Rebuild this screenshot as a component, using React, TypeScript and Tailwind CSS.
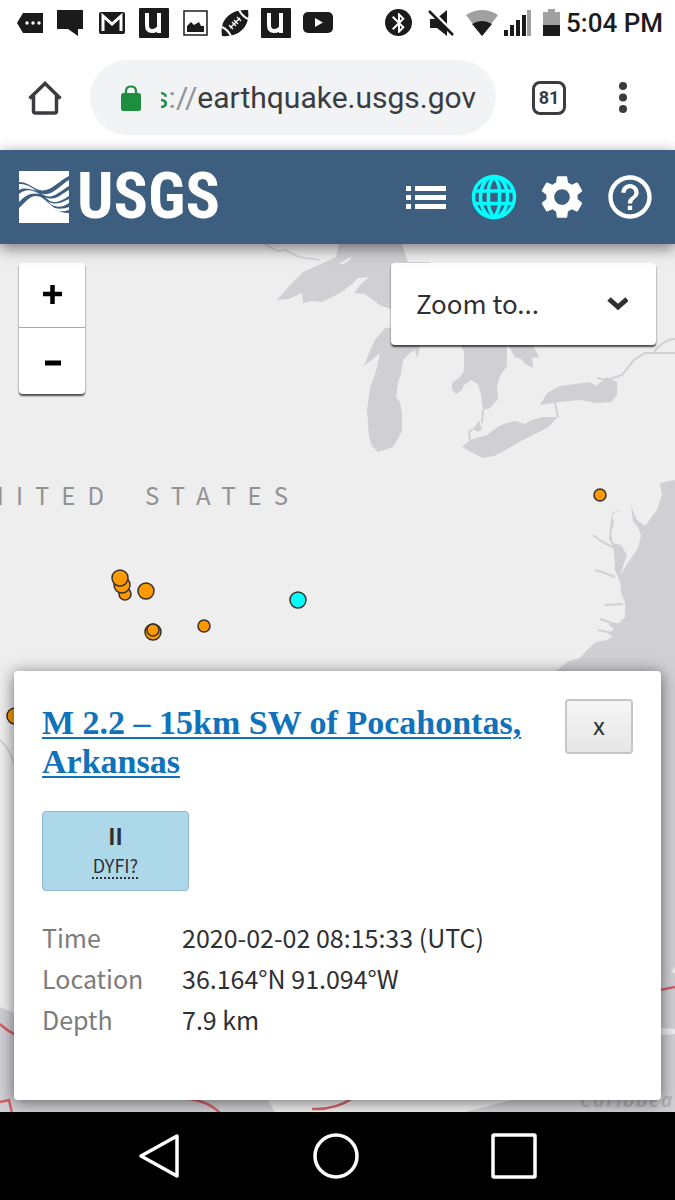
import React from "react";
import { MdBluetooth, MdHelpOutline, MdSettings } from "react-icons/md";

const MARKERS = [
  { x: 125, y: 594, r: 6 },
  { x: 122, y: 585, r: 8 },
  { x: 120, y: 578, r: 8 },
  { x: 146, y: 591, r: 8 },
  { x: 153, y: 632, r: 8 },
  { x: 153, y: 630, r: 6 },
  { x: 204, y: 626, r: 6 },
  { x: 600, y: 495, r: 6 },
  { x: 15, y: 716, r: 8 },
  { x: 298, y: 600, r: 8, selected: true },
];

const DETAILS = [
  ["Time", "2020-02-02 08:15:33 (UTC)"],
  ["Location", "36.164°N 91.094°W"],
  ["Depth", "7.9 km"],
];

function AppBadge(): React.JSX.Element {
  return (
    <svg className="size-[30px]" viewBox="0 0 30 30" aria-hidden="true">
      <rect width="30" height="30" rx="1" fill="#1b1b1b" />
      <path
        d="M8 5V17Q8 23 13 23Q18 23 20 19M20 5V25"
        fill="none"
        stroke="#fff"
        strokeWidth="4"
      />
    </svg>
  );
}

function StatusBar(): React.JSX.Element {
  return (
    <div className="flex h-[45px] items-center justify-between pl-[17px] pr-3 text-[#1b1b1b]">
      <div className="flex items-center gap-3">
        <svg className="h-[22px] w-[27px]" viewBox="0 0 27 22" aria-hidden="true">
          <path d="M6 1H26V21H6L0 11Z" fill="#1b1b1b" />
          <g fill="#fff">
            <circle cx="10" cy="11" r="1.7" />
            <circle cx="16" cy="11" r="1.7" />
            <circle cx="22" cy="11" r="1.7" />
          </g>
        </svg>
        <svg className="h-[27px] w-[30px]" viewBox="0 0 30 27" aria-hidden="true">
          <path d="M1 1H27V20H22V27L12 20H1Z" fill="#1b1b1b" />
        </svg>
        <svg className="h-[22px] w-[29px]" viewBox="0 0 29 22" aria-hidden="true">
          <rect x="1" width="26" height="22" rx="2" fill="#1b1b1b" />
          <path
            d="M5 19V4L14 12L23 4V19"
            fill="none"
            stroke="#fff"
            strokeWidth="3"
          />
        </svg>
        <AppBadge />
        <svg className="size-[28px]" viewBox="0 0 28 28" aria-hidden="true">
          <rect x="3" y="2" width="23" height="24" fill="none" stroke="#1b1b1b" strokeWidth="1.5" />
          <path d="M6 23V17L10 13L13 16L18 13L20 17L23 17V23Z" fill="#1b1b1b" />
        </svg>
        <svg className="size-[28px]" viewBox="0 0 28 28" aria-hidden="true">
          <path
            d="M1 27Q-1 14 7 7Q14 0 27 1Q29 13 21 21Q14 28 1 27Z"
            fill="#1b1b1b"
          />
          <path
            d="M1 18Q7 21 10 27M18 1Q21 7 27 10"
            fill="none"
            stroke="#fff"
            strokeWidth="2"
          />
          <path
            d="M9 19L19 9M8 16L12 20M11 13L15 17M13 11L17 15M16 8L20 12"
            stroke="#fff"
            strokeWidth="1.3"
          />
        </svg>
        <AppBadge />
        <svg className="h-[21px] w-[30px]" viewBox="0 0 30 21" aria-hidden="true">
          <rect width="30" height="21" rx="5" fill="#1b1b1b" />
          <path d="M12 6L20 10.500L12 15Z" fill="#fff" />
        </svg>
      </div>

      <div className="flex items-center">
        <span className="flex size-[27px] items-center justify-center rounded-full bg-[#1b1b1b]">
          <MdBluetooth className="size-6 text-white" />
        </span>
        <svg className="ml-4 h-[26px] w-[26px]" viewBox="0 0 26 26" aria-hidden="true">
          <path d="M2 9H8L19 0V26L9 18H2Z" fill="#1b1b1b" />
          <path d="M3 0L26 23" stroke="#fff" strokeWidth="3" />
          <path d="M1 1L25 25" stroke="#1b1b1b" strokeWidth="2.500" />
        </svg>
        <svg className="ml-3 h-[26px] w-[32px]" viewBox="0 0 32 26" aria-hidden="true">
          <path d="M16 26L0 5Q16 -5 32 5Z" fill="#a0a0a0" />
          <path d="M16 26L6 14Q16 8 26 14Z" fill="#1b1b1b" />
        </svg>
        <svg className="ml-1.5 h-[26px] w-[27px]" viewBox="0 0 27 26" aria-hidden="true">
          <path d="M0 20H4V26H0ZM6 15H10V26H6ZM12 10H16V26H12ZM18 5H22V26H18Z" fill="#1b1b1b" />
          <path d="M23 0H27V26H23Z" fill="#a0a0a0" />
        </svg>
        <svg className="ml-3 h-[27px] w-[17px]" viewBox="0 0 17 27" aria-hidden="true">
          <path d="M5 0H12V3H17V16H0V3H5Z" fill="#a0a0a0" />
          <path d="M0 16H17V27H0Z" fill="#1b1b1b" />
        </svg>
        <span className="ml-1.5 font-[Roboto,sans-serif] text-[26px] font-medium leading-8">
          5:04 PM
        </span>
      </div>
    </div>
  );
}

function AddressBar(): React.JSX.Element {
  return (
    <div className="flex h-[105px] items-center pl-7 pr-12 font-[Roboto,sans-serif]">
      <button type="button" aria-label="Home" className="shrink-0">
        <svg className="size-[34px]" viewBox="0 0 34 34" aria-hidden="true">
          <path
            d="M1.500 17.500L17 2.500L32.500 17.500M5.500 14.500V30Q5.500 32 7.500 32H26.500Q28.500 32 28.500 30V14.500"
            fill="none"
            stroke="#3a3c40"
            strokeWidth="3.500"
          />
        </svg>
      </button>
      <button
        type="button"
        className="ml-7 flex h-[75px] min-w-0 flex-1 items-center rounded-full bg-[#f1f3f5] pl-[31px] pr-5"
      >
        <svg className="h-[26px] w-[20px] shrink-0" viewBox="0 0 20 26" aria-hidden="true">
          <path d="M5 10V6Q5 1.500 10 1.500Q15 1.500 15 6V10" fill="none" stroke="#1e8e3e" strokeWidth="2.200" />
          <rect y="8" width="20" height="18" rx="2.500" fill="#1e8e3e" />
        </svg>
        <span className="ml-5 flex min-w-0 flex-1 justify-end overflow-hidden whitespace-nowrap text-[30px] leading-10 text-[#3a3c40]">
          <span className="text-[#1e8e3e]">https</span>
          <span className="text-[#8f9296]">://</span>
          earthquake.usgs.gov
        </span>
      </button>
      <button
        type="button"
        aria-label="81 open tabs"
        className="ml-9 flex size-[34px] shrink-0 items-center justify-center rounded-lg border-[3px] border-[#3a3c40] text-lg font-bold text-[#3a3c40]"
      >
        81
      </button>
      <button type="button" aria-label="Menu" className="ml-[53px] shrink-0">
        <svg className="h-[31px] w-2" viewBox="0 0 8 31" fill="#3a3c40" aria-hidden="true">
          <circle cx="4" cy="4" r="4" />
          <circle cx="4" cy="15.500" r="4" />
          <circle cx="4" cy="27" r="4" />
        </svg>
      </button>
    </div>
  );
}

function Header(): React.JSX.Element {
  return (
    <header className="relative z-10 flex h-[94px] items-center justify-between bg-[#3e5e80] pl-[19px] pr-[19px] text-white shadow-[0_4px_14px_rgba(0,0,0,0.5)]">
      <a href="#home" className="flex items-center gap-2">
        <svg className="h-[52px] w-[50px]" viewBox="0 0 50 52" aria-hidden="true">
          <rect width="50" height="52" fill="#fff" />
          <path
            d="M0 11C10 11 15 19 23 19.500C32 20 40 10 50 5V42C34 43 28 25 17 25C10 25 6 32 0 37Z"
            fill="#3e5e80"
          />
          <g fill="#fff">
            <path d="M0 13C8 12 14 18 20 21C12 18 6 16 0 19Z" />
            <path d="M0 23C7 17 13 19 21 23C13 21 6 24 0 31Z" />
            <path d="M22 22.500C33 26 40 15 50 9V15C40 21 34 28 26 24.500Z" />
            <path d="M26 26C36 31 42 23 50 19V25C42 30 37 33 30 29.500Z" />
            <path d="M29 30.500C37 35 44 31 50 28V32C44 36 38 37 32 33.500Z" />
            <path d="M32 35C38 39 44 38 50 36V39C44 41 38 41 34 37Z" />
          </g>
        </svg>
        <span className="font-['Liberation_Sans_Narrow','Roboto_Condensed','Noto_Sans_CJK_SC',sans-serif] text-[64px] font-bold leading-[60px]">
          USGS
        </span>
      </a>
      <nav className="flex items-center gap-6">
        <button type="button" aria-label="List">
          <svg className="h-[24px] w-[40px]" viewBox="0 0 40 24" fill="#fff" aria-hidden="true">
            <path d="M0 1H5V6H0ZM9 1H40V6H9ZM0 10H5V15H0ZM9 10H40V15H9ZM0 19H5V24H0ZM9 19H40V24H9Z" />
          </svg>
        </button>
        <button type="button" aria-label="Map">
          <svg className="size-[48px]" viewBox="0 0 48 48" fill="none" stroke="#00ffff" strokeWidth="3.500" aria-hidden="true">
            <circle cx="24" cy="24" r="20.500" />
            <ellipse cx="24" cy="24" rx="13.500" ry="20.500" />
            <path d="M18.500 16V32M29.500 16V32M18.500 16Q20 8 24 4Q28 8 29.500 16M18.500 32Q20 40 24 44Q28 40 29.500 32M5 18H43M5 30.500H43" />
          </svg>
        </button>
        <button type="button" aria-label="Settings" className="-ml-1.5">
          <MdSettings className="size-[52px]" />
        </button>
        <button type="button" aria-label="Help" className="-ml-2">
          <MdHelpOutline className="size-[52px]" />
        </button>
      </nav>
    </header>
  );
}

function MapCanvas(): React.JSX.Element {
  return (
    <svg
      className="absolute inset-0 size-full"
      viewBox="0 244 675 868"
      preserveAspectRatio="xMidYMin slice"
      role="img"
      aria-label="Earthquake map"
    >
      <rect y="244" width="675" height="868" fill="#eee" />
      <g fill="#d0cfd4">
        {/* Great Lakes */}
        <path d="M339 244L336 257L321 264L303 272L292 283L277 300L289 299L302 293L303 303L312 301L322 302L340 293L352 284L358 278L369 277L360 285L354 293L365 294L373 300L381 306L395 310L430 300V262L408 262L402 244Z" />
        <path d="M385 328L375 340L369 353L364 366L373 359L380 353L376 371L370 388L367 410L369 437L372 446L378 452L393 447L399 437L402 430V413L400 402L396 397L398 383L401 374L403 360L410 353L415 350L417 358L420 347V325Z" />
        <path d="M460 344L464 352V371L460 377L452 383L452 389L456 394L462 390L464 385L471 380L478 384L481 395L483 410L490 408L498 399L497 387L500 376L507 366L507 345Z" />
        <path d="M508 345L515 357L521 359L525 364L533 368L532 358L539 357L533 345Z" />
        <path d="M540 405L547 393L560 386L583 383L590 382L596 386L607 377L617 382L617 395L611 402L597 403L580 400L560 402Z" />
        <path d="M462 447L470 440L487 435L499 426L507 423L516 421L525 424L532 420L543 417L558 417L547 428L523 440L500 453L494 456L483 458L473 453Z" />
        <path d="M473 429L479 421L482 429L478 432Z" />
        {/* Atlantic coast and the Chesapeake */}
        <path d="M675 480L660 483L662 495L657 510L645 526L637 520L631 506L633 521L639 529L641 536L638 548L627 564L620 576L624 563L627 555L621 545L613 543L611 533L614 523L612 515L620 509L612 513L610 527L609 538L614 551L615 570L620 582L621 592L625 603L625 617L619 623L608 624L614 629L608 634L613 636L607 640L596 642L587 650L580 658L569 661L557 670L530 700L510 790L540 900L570 1000L590 1080L465 1112H675Z" />
        {/* Gulf of Mexico */}
        <path d="M0 1007L14 1013L100 1000L230 1040L275 1112H0Z" />
      </g>
      <g fill="#eee">
        <path d="M668 470L675 466V475L667 478Z" />
        <path d="M340 263L352 256L349 261L341 265Z" />
        <path d="M671 972L675 967V973ZM661 1028L675 1029V1034L661 1035Z" />
      </g>
      <g fill="none" stroke="#d0cfd4" strokeWidth="2">
        <path d="M483 410L482 423M470 440L469 432L473 429M558 417L555 403M597 378L607 380L622 375L634 360L645 353H675M654 352Q664 339 675 339" />
        <path d="M593 535L601 541L612 547M595 570L605 573L615 577M605 605L623 604M600 619L617 625M598 630L612 633M0 740Q10 749 15 766" />
        <path d="M265 244L277 251L285 250L299 257L320 260" strokeWidth="1.500" />
      </g>
      <g fill="none" stroke="#d86068" strokeWidth="2.500">
        <path d="M0 1024Q7 1031 18 1036M0 1102L9 1100L12 1113M170 1098Q205 1097 220 1113M312 1109Q335 1110 353 1098M655 991L675 987" />
      </g>
      <text
        x="580"
        y="1107"
        fill="#b2b1b7"
        className="font-['Open_Sans',sans-serif] text-[19px] font-semibold italic tracking-widest"
      >
        Caribbea
      </text>
      <g
        fill="#929292"
        className="font-['Noto_Sans_CJK_SC','Noto_Sans_CJK_JP',sans-serif] text-[24px] tracking-[12px]"
      >
        <text x="116" y="505" textAnchor="end">
          UNITED
        </text>
        <text x="300" y="505" textAnchor="end">
          STATES
        </text>
      </g>
      {MARKERS.map((m) => (
        <circle
          key={`${m.x}-${m.y}`}
          cx={m.x}
          cy={m.y}
          r={m.r}
          fill={m.selected ? "#00ffff" : "#ff9900"}
          stroke="#33302a"
          strokeWidth="1.500"
        />
      ))}
    </svg>
  );
}

function EventCard(): React.JSX.Element {
  return (
    <article className="relative mx-3.5 mb-3 mt-auto min-h-[429px] rounded bg-white px-7 pt-7 shadow-[0_2px_16px_rgba(0,0,0,0.55)]">
      <div className="flex items-start justify-between gap-8">
        <h1 className="pt-1 font-['Liberation_Serif',serif] text-[34px] font-bold leading-[39px]">
          <a href="#event" className="text-[#0f72ba] underline decoration-2 underline-offset-3">
            M 2.2 – 15km SW of Pocahontas, Arkansas
          </a>
        </h1>
        <button
          type="button"
          aria-label="Close"
          className="h-[55px] w-[68px] shrink-0 rounded border-2 border-[#c6c6c6] bg-linear-to-b from-[#f6f6f6] to-[#e6e6e6] pb-1 text-[24px] leading-8"
        >
          x
        </button>
      </div>
      <a
        href="#dyfi"
        className="mt-[30px] flex h-20 w-[147px] flex-col items-center justify-center rounded border border-[#8fb8c8] bg-[#add8e9] pb-1"
      >
        <strong className="text-[22px] leading-8">II</strong>
        <abbr
          title="Did You Feel It?"
          className="text-[18px] leading-7 underline decoration-dotted decoration-2 underline-offset-4"
        >
          DYFI?
        </abbr>
      </a>
      <dl className="mt-[26px] grid grid-cols-[140px_1fr] text-[25px] leading-[41px]">
        {DETAILS.map(([label, value]) => (
          <React.Fragment key={label}>
            <dt className="text-[#7c7c7c]">{label}</dt>
            <dd>{value}</dd>
          </React.Fragment>
        ))}
      </dl>
    </article>
  );
}

function EarthquakeMap(): React.JSX.Element {
  return (
    <main className="relative flex flex-1 flex-col font-['Noto_Sans_CJK_SC','Noto_Sans_CJK_JP',sans-serif] text-[#2f3033]">
      <MapCanvas />
      <div className="relative flex items-start justify-between px-[19px] pt-[19px]">
        <div className="flex w-[66px] flex-col rounded bg-white text-black shadow-[0_2px_2px_rgba(0,0,0,0.7)]">
          <button
            type="button"
            aria-label="Zoom in"
            className="flex h-[65px] items-center justify-center border-b border-[#aaa]"
          >
            <svg className="size-5" viewBox="0 0 20 20" aria-hidden="true">
              <path d="M1 9H20M10.500 0V19" stroke="#000" strokeWidth="4.500" />
            </svg>
          </button>
          <button
            type="button"
            aria-label="Zoom out"
            className="flex h-[66px] items-center justify-center"
          >
            <svg className="size-5" viewBox="0 0 20 20" aria-hidden="true">
              <path d="M3 12H19" stroke="#000" strokeWidth="5" />
            </svg>
          </button>
        </div>
        <div className="relative w-[265px]">
          <select
            aria-label="Zoom to"
            className="h-[82px] w-full appearance-none rounded bg-white pb-1 pl-[25px] pr-16 text-[26px] shadow-[0_2px_2px_rgba(0,0,0,0.7)]"
          >
            <option>Zoom to...</option>
          </select>
          <svg
            className="pointer-events-none absolute right-7 top-8 h-4 w-[22px]"
            viewBox="0 0 22 16"
            aria-hidden="true"
          >
            <path d="M3 4L12 12L21 4" fill="none" stroke="#2f3033" strokeWidth="5" />
          </svg>
        </div>
      </div>
      <EventCard />
    </main>
  );
}

function NavigationBar(): React.JSX.Element {
  return (
    <nav className="flex h-[88px] items-center justify-center gap-[132px] bg-black pr-1">
      <button type="button" aria-label="Back">
        <svg className="size-[46px]" viewBox="0 0 46 46" fill="none" stroke="#fff" strokeWidth="3.500" aria-hidden="true">
          <path d="M42 3V43L6 23Z" strokeLinejoin="round" />
        </svg>
      </button>
      <button type="button" aria-label="Home screen">
        <svg className="size-[46px]" viewBox="0 0 46 46" fill="none" stroke="#fff" strokeWidth="3.500" aria-hidden="true">
          <circle cx="23" cy="23" r="21" />
        </svg>
      </button>
      <button type="button" aria-label="Recent apps">
        <svg className="size-[46px]" viewBox="0 0 46 46" fill="none" stroke="#fff" strokeWidth="3.500" aria-hidden="true">
          <rect x="2" y="2" width="42" height="42" rx="1" />
        </svg>
      </button>
    </nav>
  );
}

export default function App(): React.JSX.Element {
  return (
    <div className="flex min-h-screen flex-col bg-white">
      <StatusBar />
      <AddressBar />
      <Header />
      <EarthquakeMap />
      <NavigationBar />
    </div>
  );
}
